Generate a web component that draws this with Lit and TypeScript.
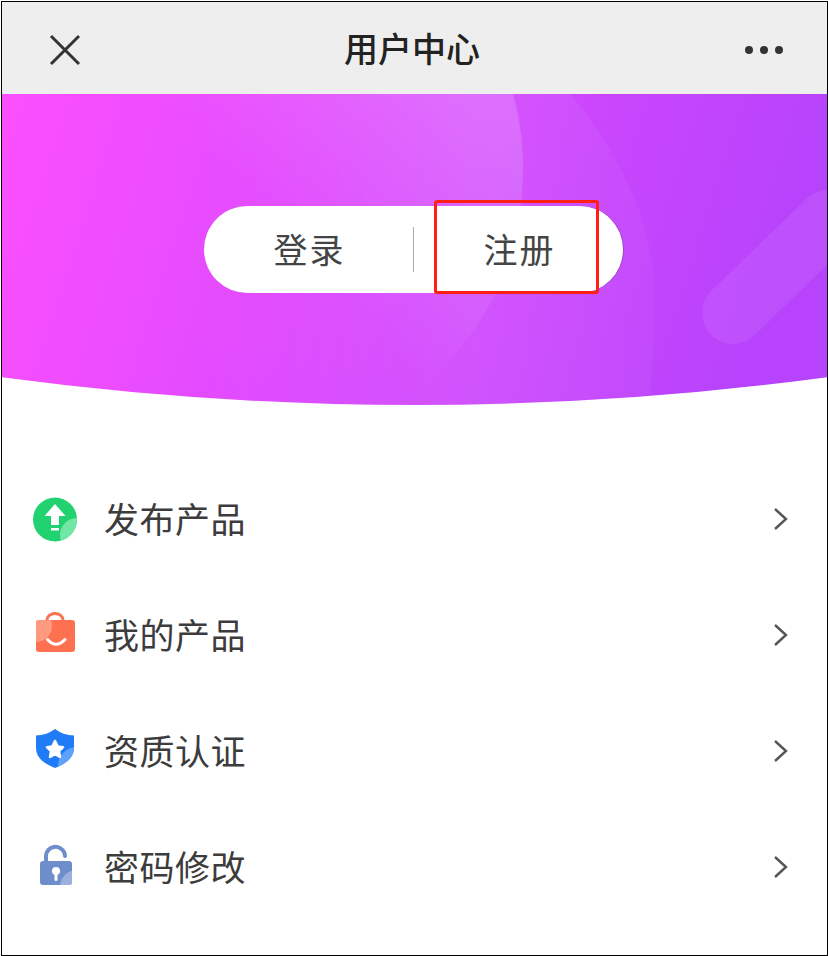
import { LitElement, css, html, svg } from 'lit';
import { customElement } from 'lit/decorators.js';

const menu = [
  {
    label: '发布产品',
    icon: svg`
      <clipPath id="c1"><circle cx="24" cy="23.5" r="22"/></clipPath>
      <circle cx="24" cy="23.5" r="22" fill="#22d16f"/>
      <circle cx="46" cy="39" r="17" fill="#72e6a4" clip-path="url(#c1)"/>
      <path d="M24 8 L34.5 20 H28 V29 H20 V20 H13.5 Z" fill="#fff"/>
      <rect x="20" y="32" width="8" height="2.5" fill="#fff"/>`,
  },
  {
    label: '我的产品',
    icon: svg`
      <clipPath id="c2"><rect x="5" y="8" width="39" height="32" rx="3"/></clipPath>
      <path d="M16 9 V8 A8 6.5 0 0 1 32 8 V9" fill="none" stroke="#fd7150" stroke-width="3"/>
      <rect x="5" y="8" width="39" height="32" rx="3" fill="#fd7150"/>
      <circle cx="5" cy="14" r="16" fill="#ff9a80" clip-path="url(#c2)"/>
      <path d="M16.5 27.5 Q25 37 34 27.5" fill="none" stroke="#fff" stroke-width="3" stroke-linecap="round"/>`,
  },
  {
    label: '资质认证',
    icon: svg`
      <clipPath id="c3"><path d="M24 1 Q32 7 43 7.5 V20 C43 30 34 36 24 40 C14 36 5 30 5 20 V7.5 Q16 7 24 1 Z"/></clipPath>
      <path d="M24 1 Q32 7 43 7.5 V20 C43 30 34 36 24 40 C14 36 5 30 5 20 V7.5 Q16 7 24 1 Z" fill="#1f7cf6"/>
      <circle cx="46" cy="38" r="19" fill="#5ea2f9" clip-path="url(#c3)"/>
      <path d="M24 13 L26.6 18.4 L32 19.2 L28 23.2 L29 29 L24 26.2 L19 29 L20 23.2 L16 19.2 L21.4 18.4 Z" fill="#fff" stroke="#fff" stroke-width="2.5" stroke-linejoin="round"/>`,
  },
  {
    label: '密码修改',
    icon: svg`
      <clipPath id="c4"><rect x="9" y="17" width="32" height="24" rx="3"/></clipPath>
      <path d="M15 18 V12 A9.5 9 0 0 1 33.5 9 L34 12" fill="none" stroke="#6f8ccb" stroke-width="4" stroke-linecap="round"/>
      <rect x="9" y="17" width="32" height="24" rx="3" fill="#6f8ccb"/>
      <circle cx="46" cy="43" r="17" fill="#9bb0dc" clip-path="url(#c4)"/>
      <circle cx="25" cy="27" r="4" fill="#fff"/>
      <rect x="23.5" y="28" width="3" height="9" rx="1.5" fill="#fff"/>`,
  },
];

@customElement('app-root')
export class AppRoot extends LitElement {
  static styles = css`
    :host {
      display: block;
      width: 828px;
      height: 956px;
      padding: 1px 0 0 1px;
      box-sizing: border-box;
      background: #fff;
      font-family: "Noto Sans CJK SC", "Noto Sans", sans-serif;
    }

    .frame {
      height: 100%;
      box-sizing: border-box;
      border: 1px solid #000;
      overflow: hidden;
      display: flex;
      flex-direction: column;
    }

    .topbar {
      height: 92px;
      flex: none;
      box-sizing: border-box;
      background: #eeeeee;
      display: flex;
      align-items: center;
      justify-content: space-between;
      padding: 3px 44px 0 46px;
      position: relative;
    }

    .topbar svg {
      display: block;
    }

    .title {
      position: absolute;
      left: 0;
      right: 5px;
      top: 0;
      text-align: center;
      font-size: 34px;
      font-weight: 500;
      color: #222;
      line-height: 92px;
    }

    .hero {
      height: 311px;
      flex: none;
      position: relative;
      box-sizing: border-box;
      padding: 112px 0 0 202px;
    }

    .hero-bg {
      position: absolute;
      left: -2px;
      top: 0;
      display: block;
    }

    .pill {
      position: relative;
      width: 419px;
      height: 87px;
      border-radius: 44px;
      background: #fff;
      box-shadow: 1px 0 0 rgba(90, 60, 110, 0.35);
      display: flex;
      align-items: center;
      font-size: 34px;
      line-height: 84px;
      color: #444;
    }

    .pill span {
      flex: 1;
      text-align: center;
      letter-spacing: 2px;
      padding: 0 0 2px 2px;
    }

    .divider {
      width: 1px;
      height: 45px;
      background: #aaa;
      flex: none;
    }

    .marker {
      position: absolute;
      left: 230px;
      top: -6px;
      width: 165px;
      height: 94px;
      box-sizing: border-box;
      border: 3px solid #ff1f14;
      border-radius: 3px;
    }

    .menu {
      padding-top: 57px;
    }

    .row {
      height: 116px;
      display: flex;
      align-items: center;
      padding: 0 38px 0 29px;
      font-size: 35px;
      color: #3c3c3c;
    }

    .row .icon {
      width: 48px;
      height: 48px;
      flex: none;
      margin-right: 25px;
    }

    .row .label {
      flex: 1;
      letter-spacing: 0.5px;
      padding-bottom: 6px;
    }

    .row .chevron {
      margin-bottom: 2px;
    }
  `;

  render() {
    return html`
      <div class="frame">
        <div class="topbar">
          <svg width="34" height="34" viewBox="0 0 34 34">
            <path d="M3 3 L31 31 M31 3 L3 31" stroke="#333" stroke-width="3" fill="none"/>
          </svg>
          <div class="title">用户中心</div>
          <svg width="38" height="10" viewBox="0 0 38 10">
            <circle cx="4" cy="5" r="4" fill="#333"/>
            <circle cx="19" cy="5" r="4" fill="#333"/>
            <circle cx="34" cy="5" r="4" fill="#333"/>
          </svg>
        </div>
        <div class="hero">
          <svg class="hero-bg" width="828" height="311" viewBox="0 0 828 311">
            <defs>
              <linearGradient id="base" x1="0" y1="0" x2="1" y2="0.12">
                <stop offset="0" stop-color="#fc4fff"/>
                <stop offset="1" stop-color="#b743fc"/>
              </linearGradient>
              <linearGradient id="glow" x1="0.2" y1="0.75" x2="1" y2="0.12">
                <stop offset="0.3" stop-color="#fff" stop-opacity="0"/>
                <stop offset="1" stop-color="#fff" stop-opacity="0.16"/>
              </linearGradient>
              <linearGradient id="glow2" gradientUnits="userSpaceOnUse" x1="200" y1="0" x2="655" y2="0">
                <stop offset="0" stop-color="#fff" stop-opacity="0"/>
                <stop offset="0.6" stop-color="#fff" stop-opacity="0.07"/>
                <stop offset="1" stop-color="#fff" stop-opacity="0.03"/>
              </linearGradient>
              <clipPath id="curve">
                <path d="M0 0 H828 V283 Q414 339 0 283 Z"/>
              </clipPath>
            </defs>
            <g clip-path="url(#curve)">
              <rect width="828" height="311" fill="url(#base)"/>
              <path d="M570 0 C620 60 655 130 655 206 C655 250 652 280 648 311 H0 V0 Z" fill="url(#glow2)"/>
              <path d="M150 0 H513 C530 60 525 130 500 190 C475 245 435 285 400 311 H150 Z" fill="url(#glow)"/>
              <path d="M733 219 L828 127" stroke="#fff" stroke-opacity="0.075" stroke-width="62" stroke-linecap="round" fill="none"/>
            </g>
          </svg>
          <div class="pill">
            <span>登录</span>
            <div class="divider"></div>
            <span>注册</span>
            <div class="marker"></div>
          </div>
        </div>
        <div class="menu">
          ${menu.map(
            (item) => html`
              <div class="row">
                <svg class="icon" viewBox="0 0 48 48">${item.icon}</svg>
                <div class="label">${item.label}</div>
                <svg class="chevron" width="16" height="24" viewBox="0 0 16 24">
                  <path d="M2 2 L13 12 L2 22" fill="none" stroke="#555" stroke-width="2.4"/>
                </svg>
              </div>
            `
          )}
        </div>
      </div>
    `;
  }
}
